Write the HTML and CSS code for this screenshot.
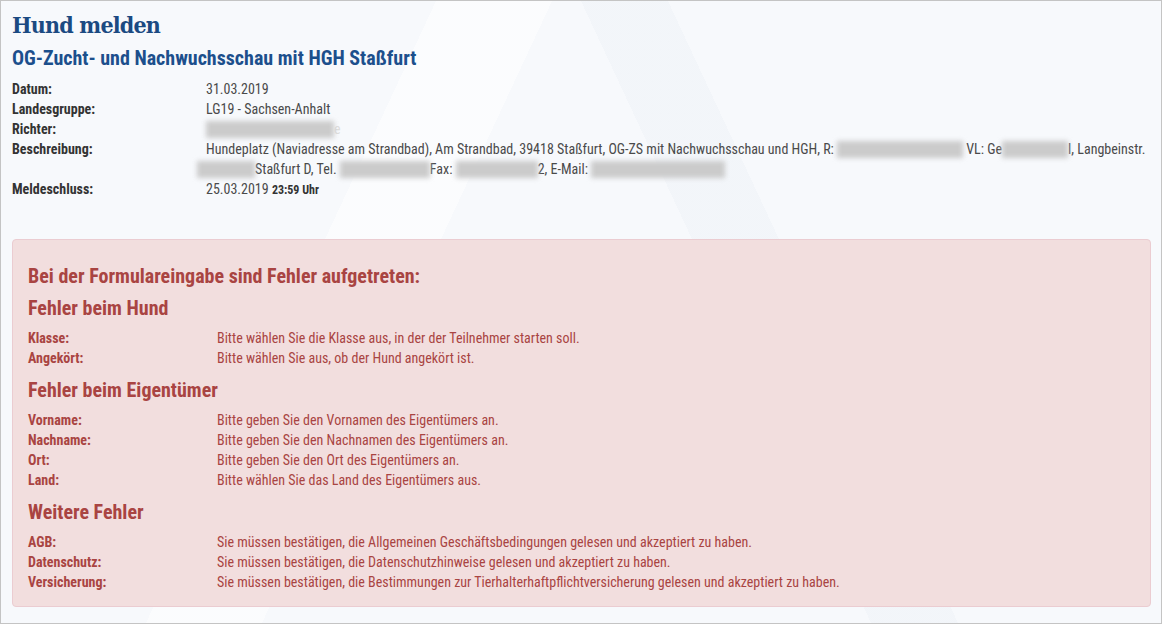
FILE: index.html
```html
<!DOCTYPE html>
<html lang="de">
<head>
    <meta charset="UTF-8">
    <meta name="viewport" content="width=device-width, initial-scale=1.0">
    <title>Hund melden</title>
    <link rel="stylesheet" href="styles.css">
</head>
<body>
<div class="frame">
    <main class="page">
        <h1 class="page-title">Hund melden</h1>
        <h2 class="event-title">OG-Zucht- und Nachwuchsschau mit HGH Staßfurt</h2>

        <dl class="event-info">
            <dt>Datum:</dt>
            <dd>31.03.2019</dd>
            <dt>Landesgruppe:</dt>
            <dd>LG19 - Sachsen-Anhalt</dd>
            <dt>Richter:</dt>
            <dd><span class="redact r-judge"></span><span class="ghost">e</span></dd>
            <dt>Beschreibung:</dt>
            <dd>Hundeplatz (Naviadresse am Strandbad), Am Strandbad, 39418 Staßfurt, OG-ZS mit Nachwuchsschau und HGH, R: <span class="redact r-name"></span> VL: Ge<span class="redact r-vl"></span>l, Langbeinstr. <span class="redact r-street"></span>Staßfurt D, Tel. <span class="redact r-tel"></span>Fax: <span class="redact r-fax"></span>2, E-Mail: <span class="redact r-mail"></span></dd>
            <dt>Meldeschluss:</dt>
            <dd>25.03.2019 <strong class="time">23:59 Uhr</strong></dd>
        </dl>

        <!-- Fehlermeldungen -->
        <section class="alert">
            <h3>Bei der Formulareingabe sind Fehler aufgetreten:</h3>

            <h3>Fehler beim Hund</h3>
            <dl class="errors">
                <dt>Klasse:</dt>
                <dd>Bitte wählen Sie die Klasse aus, in der der Teilnehmer starten soll.</dd>
                <dt>Angekört:</dt>
                <dd>Bitte wählen Sie aus, ob der Hund angekört ist.</dd>
            </dl>

            <h3>Fehler beim Eigentümer</h3>
            <dl class="errors">
                <dt>Vorname:</dt>
                <dd>Bitte geben Sie den Vornamen des Eigentümers an.</dd>
                <dt>Nachname:</dt>
                <dd>Bitte geben Sie den Nachnamen des Eigentümers an.</dd>
                <dt>Ort:</dt>
                <dd>Bitte geben Sie den Ort des Eigentümers an.</dd>
                <dt>Land:</dt>
                <dd>Bitte wählen Sie das Land des Eigentümers aus.</dd>
            </dl>

            <h3>Weitere Fehler</h3>
            <dl class="errors">
                <dt>AGB:</dt>
                <dd>Sie müssen bestätigen, die Allgemeinen Geschäftsbedingungen gelesen und akzeptiert zu haben.</dd>
                <dt>Datenschutz:</dt>
                <dd>Sie müssen bestätigen, die Datenschutzhinweise gelesen und akzeptiert zu haben.</dd>
                <dt>Versicherung:</dt>
                <dd>Sie müssen bestätigen, die Bestimmungen zur Tierhalterhaftpflichtversicherung gelesen und akzeptiert zu haben.</dd>
            </dl>
        </section>
    </main>
</div>
</body>
</html>
```

FILE: styles.css
```css
* {
    margin: 0;
    padding: 0;
    box-sizing: border-box;
}

html, body {
    height: 100%;
}

body {
    font-family: "Roboto Condensed", Roboto, "Liberation Sans Narrow", sans-serif;
    font-stretch: condensed;
    font-size: 14px;
    line-height: 20px;
    color: #555;
    background-color: #fff;
}

.frame {
    height: 100%;
    border: 1px solid #c4c4c4;
    background-color: #f7f9fc;
    background-image:
        linear-gradient(115deg, transparent 0 30%, rgba(255, 255, 255, 0.5) 30% 38%, transparent 38%),
        linear-gradient(65deg, transparent 0 60%, rgba(238, 242, 247, 0.5) 60% 66%, transparent 66%);
}

.page {
    padding: 9px 10px 0 11px;
}

.page-title {
    font-family: "DejaVu Serif", "Liberation Serif", serif;
    font-size: 23px;
    line-height: 30px;
    letter-spacing: -0.8px;
    color: #1b4a82;
    font-weight: bold;
}

.event-title {
    margin-top: 7px;
    font-size: 20px;
    line-height: 22px;
    color: #1c4f8c;
    font-weight: bold;
}

.event-info {
    display: grid;
    grid-template-columns: 194px 1fr;
    margin-top: 10px;
    margin-right: -8px;
}

.event-info dt {
    font-weight: bold;
    color: #333;
}

.event-info dd {
    color: #4a4a4a;
}

.time {
    font-size: 12px;
    color: #333;
}

.redact {
    display: inline-block;
    height: 17px;
    vertical-align: -4px;
    background-color: #cbcbcb;
    filter: blur(2.5px);
}

.ghost {
    color: #ddd;
}

.r-judge { width: 128px; }
.r-name { width: 126px; }
.r-vl { width: 66px; }
.r-street { width: 58px; margin-left: -9px; }
.r-tel { width: 90px; }
.r-fax { width: 82px; }
.r-mail { width: 134px; }

.alert {
    margin-top: 39px;
    padding: 14px 15px 14px 15px;
    background-color: #f2dede;
    border: 1px solid #ebccd1;
    border-radius: 4px;
    color: #a94442;
}

.alert h3 {
    margin: 12px 0 10px;
    font-size: 20px;
    line-height: 20px;
    font-weight: bold;
}

.alert h3:first-child {
    margin-bottom: 0;
}

.errors {
    display: grid;
    grid-template-columns: 189px 1fr;
}

.errors dt {
    font-weight: bold;
}
```
